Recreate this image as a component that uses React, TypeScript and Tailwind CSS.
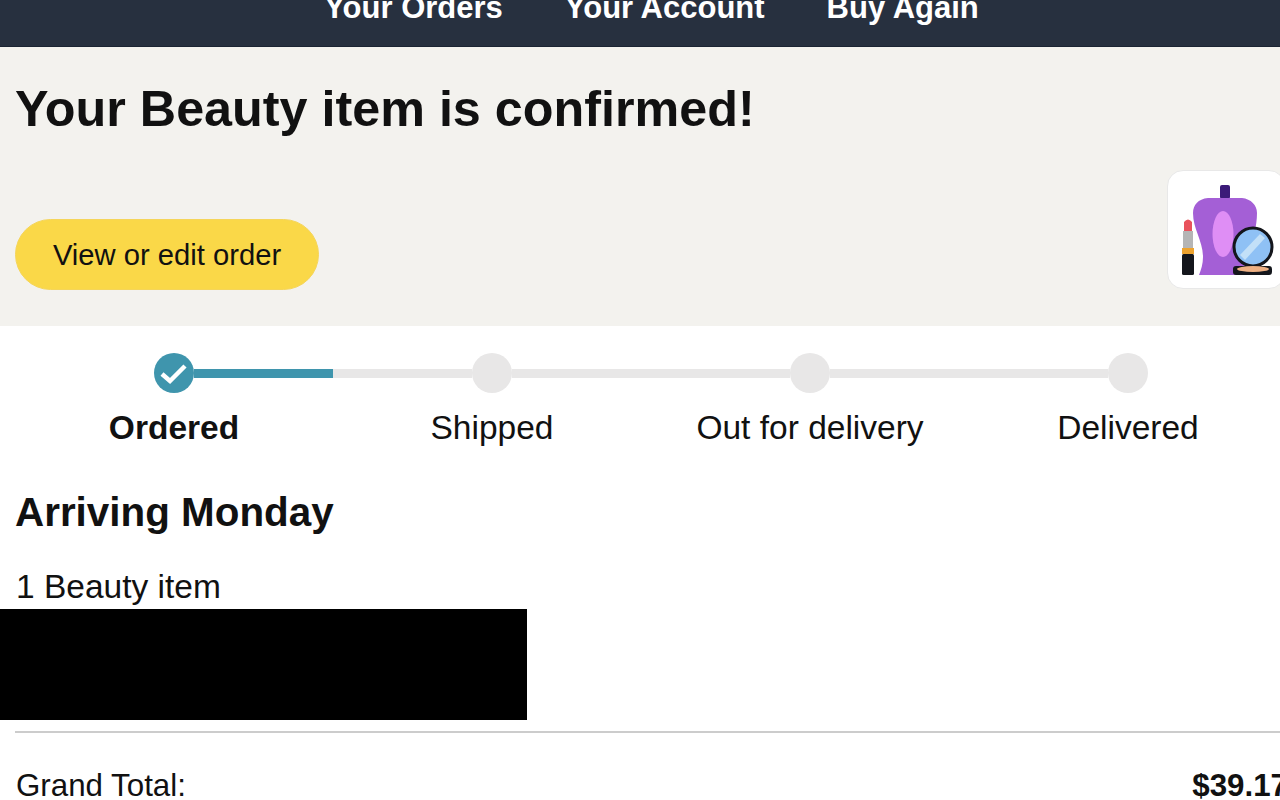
import React from 'react';

const steps = ['Ordered', 'Shipped', 'Out for delivery', 'Delivered'];

const BeautyIcon = () => (
  <svg viewBox="0 0 118 119" className="w-[118px] h-[119px]">
    <rect x="52" y="14" width="10" height="14" rx="2" fill="#3b1a78" />
    <path d="M40 27 C30 28 25 34 25 42 C25 58 35 70 35 86 C35 93 33 99 31 104 L80 104 L80 85 C85 70 89 55 89 42 C89 34 83 28 74 27 Z" fill="#a45fd6" />
    <ellipse cx="55" cy="63" rx="10.5" ry="23" fill="#df8ef5" />
    <rect x="14" y="83" width="12" height="21" rx="1.5" fill="#14161c" />
    <rect x="14" y="77" width="12" height="6" fill="#eda32f" />
    <rect x="15" y="60" width="10" height="17" fill="#b5b5b5" />
    <path d="M16 60 L16 51 Q20 46 24 51 L24 60 Z" fill="#e9525c" />
    <circle cx="85" cy="76" r="19" fill="#8fc1f5" stroke="#14161c" strokeWidth="3" />
    <path d="M72 84 L92 63 L97 67 L77 89 Z" fill="#c3e0f8" />
    <rect x="65" y="95" width="39" height="9" rx="3" fill="#14161c" />
    <ellipse cx="85" cy="98" rx="16" ry="3" fill="#eeb083" />
  </svg>
);

export default function App() {
  return (
    <div className="w-[1280px] h-[800px] overflow-hidden bg-white text-[#111] font-['Liberation_Sans',Arial,sans-serif]">
      {/* Top nav */}
      <div className="h-[47px] bg-[#27303f] border-b border-[#1b2433] overflow-hidden flex justify-center gap-[62px] pl-[23px] text-white font-bold text-[31px] leading-[36px]">
        <span className="-mt-[10px]">Your Orders</span>
        <span className="-mt-[10px]">Your Account</span>
        <span className="-mt-[10px]">Buy Again</span>
      </div>

      {/* Banner */}
      <div className="h-[279px] bg-[#f3f2ee] pl-[15px] pt-[34px] flex flex-col">
        <h1 className="text-[50.3px] leading-[56px] font-bold whitespace-nowrap">Your Beauty item is confirmed!</h1>
        <div className="flex items-start justify-between mt-[33px] w-[1270px] shrink-0">
          <button className="mt-[49px] w-[304px] h-[71px] pt-[2px] rounded-full bg-[#fad848] border border-[#f5d55a] text-[29.2px] text-[#111]">
            View or edit order
          </button>
          <div className="w-[118px] h-[119px] bg-white rounded-[16px] border border-[#e8e8e8] shrink-0">
            <BeautyIcon />
          </div>
        </div>
      </div>

      {/* Progress */}
      <div className="pl-[15px] pt-[27px]">
        <div className="flex items-center pl-[139px]">
          <div className="w-[40px] h-[40px] rounded-full bg-[#3f95ad] flex items-center justify-center shrink-0">
            <svg viewBox="0 0 40 40" className="w-[40px] h-[40px]">
              <path d="M8 21 L16 28 L31 13" fill="none" stroke="#fff" strokeWidth="4.5" />
            </svg>
          </div>
          <div className="w-[139px] h-[9px] bg-[#3f95ad]" />
          <div className="w-[139px] h-[9px] bg-[#e8e7e7]" />
          <div className="w-[40px] h-[40px] rounded-full bg-[#e8e7e7] shrink-0" />
          <div className="w-[278px] h-[9px] bg-[#e8e7e7]" />
          <div className="w-[40px] h-[40px] rounded-full bg-[#e8e7e7] shrink-0" />
          <div className="w-[278px] h-[9px] bg-[#e8e7e7]" />
          <div className="w-[40px] h-[40px] rounded-full bg-[#e8e7e7] shrink-0" />
        </div>
        <div className="grid grid-cols-[318px_318px_318px_318px] mt-[15px] text-[33.5px] leading-[40px] text-center">
          {steps.map((s, i) => (
            <div key={s} className={i === 0 ? 'font-bold' : ''}>{s}</div>
          ))}
        </div>
      </div>

      {/* Arrival */}
      <div className="pl-[15px] pt-[40px]">
        <h2 className="text-[40.4px] leading-[48px] font-bold">Arriving Monday</h2>
        <p className="text-[33.5px] leading-[40px] mt-[31px] pl-[1px]">1 Beauty item</p>
      </div>
      <div className="w-[527px] h-[111px] bg-black mt-[2px]" />

      {/* Total */}
      <div className="ml-[15px] mt-[11px] border-t-2 border-[#cccccc] w-[1273px] flex justify-between pt-[33px] text-[31.3px] leading-[40px]">
        <span className="pl-[1px]">Grand Total:</span>
        <span className="font-bold">$39.17</span>
      </div>
    </div>
  );
}
